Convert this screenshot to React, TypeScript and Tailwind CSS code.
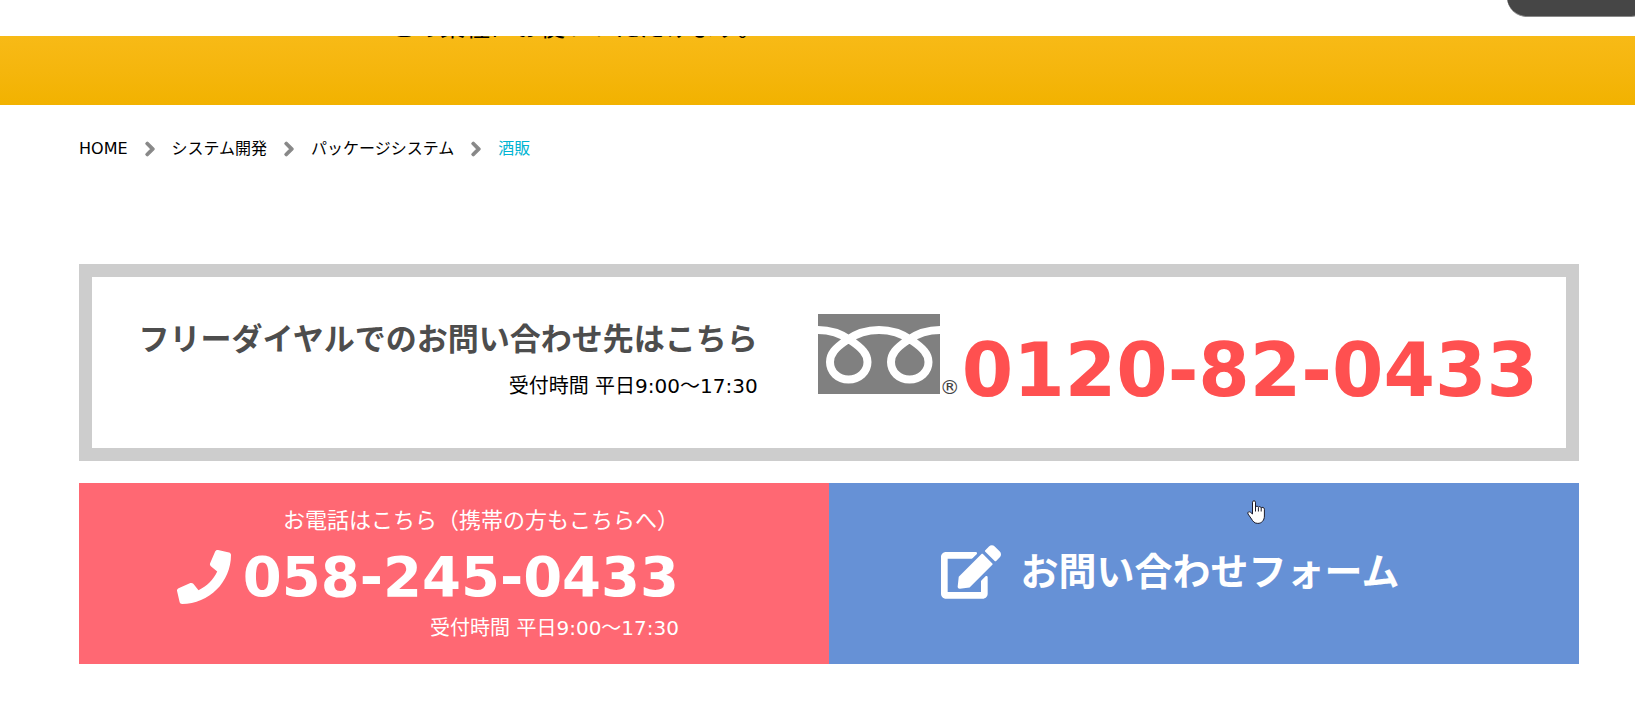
import { Fragment } from "react";
import { FaChevronRight, FaEdit, FaPhone } from "react-icons/fa";

const CRUMBS = [
  { label: "HOME", href: "#home" },
  { label: "システム開発", href: "#system" },
  { label: "パッケージシステム", href: "#package" },
];

const HOURS = "受付時間 平日9:00～17:30";

function FreeDialLogo() {
  return (
    <svg viewBox="0 0 122 80" className="h-20 w-[122px] flex-none" role="img" aria-label="フリーダイヤル">
      <rect width="122" height="80" fill="#808080" />
      <path
        d="M0 16C12 16 22 19 32 26C44 34 49.500 40 49.500 48C49.500 58 41 65.500 30.500 65.500C20 65.500 12 58 12 48C12 40 17 34 29 26C39 19 49 16 61 16C73 16 83 19 93 26C105 34 110.500 40 110.500 48C110.500 58 102 65.500 91.500 65.500C81 65.500 73 58 73 48C73 40 78 34 90 26C100 19 110 16 122 16"
        fill="none"
        stroke="#fff"
        strokeWidth="8"
      />
    </svg>
  );
}

function HandCursor() {
  return (
    <svg viewBox="0 0 18 24" className="absolute left-[418px] top-[17px] h-6 w-[18px]" aria-hidden="true">
      <path
        d="M5.500 14V2.200C5.500 0.300 8.500 0.300 8.500 2.200V7C9 5.800 11.200 6 11.400 7.300C12 6.200 14 6.500 14.200 7.900C15 6.900 17.400 7.200 17.400 9.200V16C17.400 20.500 14.500 23.400 10.800 23.400C7.500 23.400 6 21.500 4.500 19L1 14C0 12.300 2 11.100 3.400 12.200Z"
        fill="#fff"
        stroke="#1a1a2a"
      />
      <path d="M8.500 7V11.500M11.400 7.500V11.500M14.200 8V11.500" fill="none" stroke="#1a1a2a" />
    </svg>
  );
}

function Breadcrumb() {
  return (
    <nav aria-label="パンくず" className="flex items-center gap-4 text-base leading-6">
      {CRUMBS.map((c) => (
        <Fragment key={c.href}>
          <a href={c.href}>{c.label}</a>
          <FaChevronRight className="h-4 w-3 stroke-[#888] stroke-[40px] text-[#888]" />
        </Fragment>
      ))}
      <span className="text-[#00b4d2]">酒販</span>
    </nav>
  );
}

export default function App() {
  return (
    <div className="relative overflow-hidden bg-white pb-12 font-['DejaVu_Sans','Noto_Sans_CJK_JP',sans-serif] text-black">
      <header className="h-9">
        <button
          type="button"
          aria-label="メニュー"
          className="absolute -right-4 -top-12 h-[65px] w-36 rounded-[20px] border-b border-[#888] bg-[#464646]"
        />
      </header>

      <div className="h-[69px] overflow-hidden bg-linear-to-b from-[#f8ba16] to-[#f2b200] pl-[390px]">
        <p className="-mt-6 text-[25px] leading-8">どの業種にお使いいただけます。</p>
      </div>

      <main className="pl-[79px] pr-14 pt-8">
        <Breadcrumb />

        <section className="mt-[103px] flex items-start justify-end border-[13px] border-[#cdcdcd] pb-10 pl-8 pr-7 pt-[37px]">
          <div className="flex-1 pt-0.5 text-right">
            <h2 className="text-[31px] font-bold leading-[46px] text-[#4d4d4d]">
              フリーダイヤルでのお問い合わせ先はこちら
            </h2>
            <p className="mt-2 text-xl leading-8">{HOURS}</p>
          </div>
          <div className="ml-[60px] flex items-start">
            <FreeDialLogo />
            <span className="mt-[61px] text-xl leading-6 text-[#444]">®</span>
            <a href="tel:0120820433" className="pl-0.5 pt-[18px] text-[74px] font-bold leading-[76px] text-[#ff5050]">
              0120-82-0433
            </a>
          </div>
        </section>

        <section className="mt-[22px] grid grid-cols-2 text-white">
          <a href="tel:0582450433" className="flex flex-col items-end bg-[#ff6873] pb-5 pr-[150px] pt-5">
            <span className="text-[22px] leading-9">お電話はこちら（携帯の方もこちらへ）</span>
            <span className="mt-0.5 flex items-center gap-3 text-[56px] font-bold leading-[71px]">
              <FaPhone className="size-[54px]" />
              058-245-0433
            </span>
            <span className="text-xl leading-8">{HOURS}</span>
          </a>
          <a href="#contact" className="relative flex items-center justify-center gap-5 bg-[#6691d6] pb-1 pr-[68px]">
            <FaEdit className="h-[54px] w-[60px]" />
            <span className="text-[38px] font-bold leading-[56px]">お問い合わせフォーム</span>
            <HandCursor />
          </a>
        </section>
      </main>
    </div>
  );
}
